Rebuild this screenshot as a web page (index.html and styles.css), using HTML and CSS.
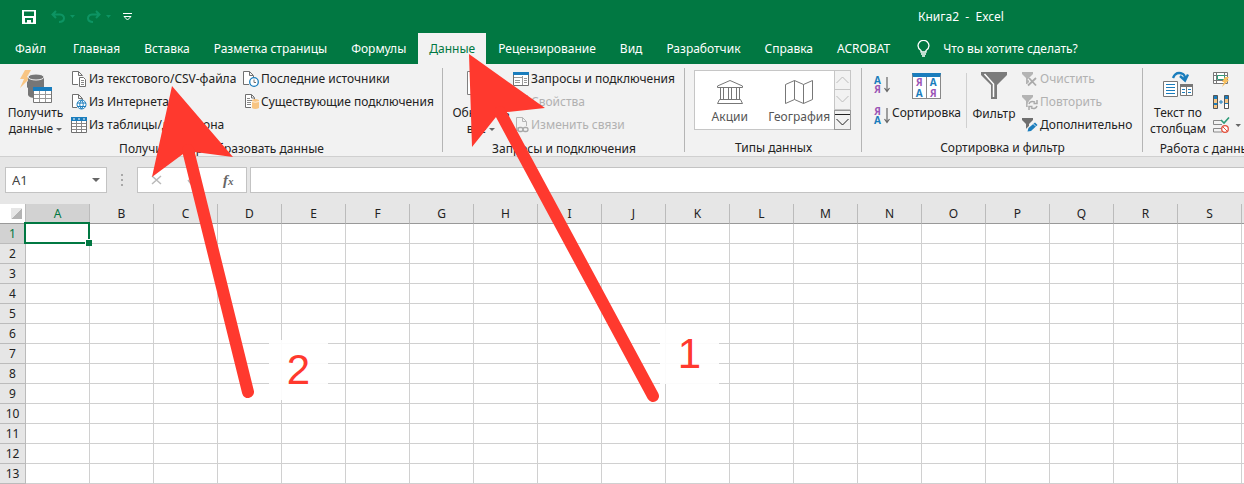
FILE: index.html
```html
<!DOCTYPE html>
<html lang="ru">
<head>
<meta charset="utf-8">
<title>Книга2 - Excel</title>
<link rel="stylesheet" href="styles.css">
</head>
<body>
<div class="app">
  <header class="titlebar">
    <div class="quick">
      <button class="qbtn save" aria-label="Сохранить"><svg width="14" height="14" viewBox="0 0 14 14"><path fill="#fff" fill-rule="evenodd" d="M0 0H14V14H0ZM2 1.500V6H12V1.500ZM3 8V12.500H5V10H9V12.500H11V8Z"/><path fill="#fff" d="M6 11h2v2H6z"/></svg></button>
      <button class="qbtn" aria-label="Отменить"><svg width="25" height="14" viewBox="0 0 25 14"><path d="M5 1L1.500 4.500L5 8M2 4.500H9Q13 5 13 8.500Q12.500 12 8 12" fill="none" stroke="#0d9463" stroke-width="2"/><path d="M19 5h5l-2.500 3z" fill="#0d9463"/></svg></button>
      <button class="qbtn" aria-label="Вернуть"><svg width="25" height="14" viewBox="0 0 25 14"><path d="M9 1L12.500 4.500L9 8M12 4.500H5Q1 5 1 8.500Q1.500 12 6 12" fill="none" stroke="#0d9463" stroke-width="2"/><path d="M19 5h5l-2.500 3z" fill="#0d9463"/></svg></button>
      <button class="qbtn" aria-label="Настройка панели"><svg width="9" height="8" viewBox="0 0 9 8"><path d="M0 .5H9M1 3.500L4.500 7L8 3.500Z" fill="none" stroke="#fff"/></svg></button>
    </div>
    <div class="doc-title">Книга2&nbsp; -&nbsp; Excel</div>
  </header>
  <nav class="tabs">
    <button class="tab file">Файл</button>
    <button class="tab">Главная</button>
    <button class="tab">Вставка</button>
    <button class="tab">Разметка страницы</button>
    <button class="tab">Формулы</button>
    <button class="tab active">Данные</button>
    <button class="tab">Рецензирование</button>
    <button class="tab">Вид</button>
    <button class="tab">Разработчик</button>
    <button class="tab">Справка</button>
    <button class="tab">ACROBAT</button>
    <button class="tab tell"><svg width="13" height="17" viewBox="0 0 13 17"><path d="M4 12V10.500Q1 8.500 1 5.800A5.300 5.200 0 0 1 12 5.800Q12 8.500 9 10.500V12ZM4 14H9M5 16H8" fill="none" stroke="#fff" stroke-width="1.300"/></svg>Что вы хотите сделать?</button>
  </nav>

  <main class="ribbon">
    <section class="group g-get">
      <div class="body">
        <button class="big"><svg width="34" height="33" viewBox="0 0 34 33"><path d="M6 0H12L8 7H12L1 18L5 9H1Z" fill="#f8c583"/><path d="M9 7V25Q10 28 16 28V17H25V7Z" fill="#767676"/><path d="M8 12L12 8V15L8 18Z" fill="#767676"/><ellipse cx="17" cy="7" rx="8" ry="3" fill="#767676" stroke="#f2f2f2"/><path d="M14.500 18.500H32.500V32.500H14.500Z" fill="#fff" stroke="#767676"/><path d="M14 17H33V21H14Z" fill="#1a7dbd"/><path d="M20.500 21V32M26.500 21V32M15 24.500H32M15 28.500H32" stroke="#999"/></svg><span>Получить<br>данные <i class="caret"></i></span></button>
        <div class="stack">
          <button class="cmd"><svg width="16" height="16" viewBox="0 0 16 16"><path d="M7 13.500H1.500V.5H7.500L11.500 4.500V5M7.500 .5V4.500H11" fill="#fff" stroke="#707070"/><path d="M8.500 6.500H12.500L14.500 8.500V15.500H8.500Z" fill="#fff" stroke="#707070"/><path d="M10 9.500h3M10 11.500h3M10 13.500h3" stroke="#888"/></svg>Из текстового/CSV-файла</button>
          <button class="cmd"><svg width="16" height="16" viewBox="0 0 16 16"><path d="M6 13.500H1.500V.5H7.500L11.500 4.500V6M7.500 .5V4.500H11" fill="#fff" stroke="#707070"/><circle cx="10.500" cy="10.500" r="4.500" fill="#fff" stroke="#1a7dbd"/><path d="M6 9h9M6 12.500h9M10.500 6Q7 10.500 10.500 15M10.500 6Q14 10.500 10.500 15" fill="none" stroke="#1a7dbd"/></svg>Из Интернета</button>
          <button class="cmd"><svg width="16" height="16" viewBox="0 0 16 16"><path d="M.5 1V15.500H15.500V1" fill="#fff" stroke="#707070"/><path d="M5.500 4V15M10.500 4V15M1 6.500H15M1 9.500H15M1 12.500H15" stroke="#888"/><path d="M0 0H16V4H0Z" fill="#1a7dbd"/><path d="M2 2h2M7 2h2M12 2h2" stroke="#fff"/></svg>Из таблицы/диапазона</button>
        </div>
        <div class="stack">
          <button class="cmd"><svg width="16" height="16" viewBox="0 0 16 16"><path d="M6 13.500H.5V.5H6.500L10.500 4.500V6M6.500 .5V4.500H10" fill="#fff" stroke="#707070"/><circle cx="11" cy="11" r="4.300" fill="#fff" stroke="#1a7dbd" stroke-width="1.300"/><path d="M11 8.500V11.500H13" fill="none" stroke="#707070"/></svg>Последние источники</button>
          <button class="cmd"><svg width="16" height="16" viewBox="0 0 16 16"><path d="M8 13.500H2.500V.5H8.500L11.500 3.500V6M8.500 .5V4H11" fill="#fff" stroke="#707070"/><path d="M4 4.500h3M4 6.500h5M4 8.500h4M4 10.500h4" stroke="#888"/><path d="M9 6Q12 4 16 6V14Q12 16 9 14Z" fill="#f8c583"/><path d="M9 7.500Q12 9 16 7.500" fill="none" stroke="#fff" stroke-width=".7"/></svg>Существующие подключения</button>
        </div>
      </div>
      <h2 class="caption">Получить и преобразовать данные</h2>
    </section>

    <section class="group g-query">
      <div class="body">
        <button class="big"><svg width="28" height="33" viewBox="0 0 28 33"><path d="M.5 1.500H15L21.500 8V24.500H.5ZM15 1.500V8H21.500" fill="#fff" stroke="#808080"/></svg><span>Обновить<br>все <i class="caret"></i></span></button>
        <div class="stack">
          <button class="cmd"><svg width="16" height="14" viewBox="0 0 16 14"><path d="M.5 1V13.500H15.500V1" fill="#fff" stroke="#707070"/><path d="M0 0H16V3H0Z" fill="#1a7dbd"/><path d="M9.500 4V13M1 5.500H9M11 6.500h3M11 8.500h3M11 10.500h3M2 8.500h5M2 10.500h5" stroke="#999"/></svg>Запросы и подключения</button>
          <button class="cmd" disabled><svg width="16" height="16" viewBox="0 0 16 16"><path d="M3.500 1.500H14.500V13.500H3.500Z" fill="#fff" stroke="#b5b5b5"/></svg>Свойства</button>
          <button class="cmd" disabled><svg width="16" height="16" viewBox="0 0 16 16"><path d="M5 10V13.500H3.500V.5H9.500L13.500 4.500V9M9.500 .5V4.500H13" fill="none" stroke="#b5b5b5"/><rect x="5" y="10.500" width="5" height="4" rx="2" fill="none" stroke="#a8a8a8" stroke-width="1.300"/><rect x="10" y="10.500" width="5" height="4" rx="2" fill="none" stroke="#a8a8a8" stroke-width="1.300"/></svg>Изменить связи</button>
        </div>
      </div>
      <h2 class="caption">Запросы и подключения</h2>
    </section>

    <section class="group g-types">
      <div class="body">
        <div class="gallery">
          <button class="type"><svg width="28" height="26" viewBox="0 0 28 26"><path d="M1.500 8.500V7L14 1.500L26.500 7V8.500ZM3.500 20.500H24.500L26.500 24.500H1.500ZM4.500 9V20M7.500 9V20M12.500 9V20M15.500 9V20M20.500 9V20M23.500 9V20" fill="none" stroke="#777"/></svg>Акции</button>
          <button class="type"><svg width="30" height="26" viewBox="0 0 30 26"><path d="M1.500 5.500L10.500 1.500L19.500 5.500L28.500 1.500V20.500L19.500 24.500L10.500 20.500L1.500 24.500ZM10.500 1.500V20.500M19.500 5.500V24.500" fill="none" stroke="#777"/></svg>География</button>
          <div class="scroll">
            <button aria-label="Вверх" disabled><svg width="13" height="8" viewBox="0 0 13 8"><path d="M.5 7L6.500 1L12.500 7" fill="none" stroke="#bbb"/></svg></button>
            <button aria-label="Вниз" disabled><svg width="13" height="8" viewBox="0 0 13 8"><path d="M.5 1L6.500 7L12.500 1" fill="none" stroke="#bbb"/></svg></button>
            <button class="more" aria-label="Ещё"><svg width="15" height="14" viewBox="0 0 15 14"><path d="M0 1.500H15M1.500 6L7.500 12L13.500 6" fill="none" stroke="#222"/></svg></button>
          </div>
        </div>
      </div>
      <h2 class="caption">Типы данных</h2>
    </section>

    <section class="group g-sort">
      <div class="body">
        <div class="az">
          <button class="azbtn" aria-label="Сортировка от А до Я"><span class="letters"><b class="blue">А</b><b class="violet">Я</b></span><svg width="6" height="16" viewBox="0 0 6 16"><path d="M3 0V14M.5 11L3 14.500L5.500 11" fill="none" stroke="#666" stroke-width="1.200"/></svg></button>
          <button class="azbtn" aria-label="Сортировка от Я до А"><span class="letters"><b class="violet">Я</b><b class="blue">А</b></span><svg width="6" height="16" viewBox="0 0 6 16"><path d="M3 0V14M.5 11L3 14.500L5.500 11" fill="none" stroke="#666" stroke-width="1.200"/></svg></button>
        </div>
        <button class="big sort"><span class="sorticon"><b class="violet">Я</b><b class="blue">А</b><b class="blue">А</b><b class="violet">Я</b></span><span>Сортировка</span></button>
        <button class="big filter"><svg width="28" height="33" viewBox="0 0 28 33"><path d="M1 2H27V5L17 15V29H11V15L1 5Z" fill="#7b7b7b"/><path d="M4.500 4L13.500 14V27" fill="none" stroke="#fff" stroke-width="1.500"/></svg><span>Фильтр</span></button>
        <div class="stack">
          <button class="cmd" disabled><svg width="16" height="16" viewBox="0 0 16 16"><path d="M0 1H11V3L7 7V13H4V7L0 3Z" fill="#b4b4b4"/><path d="M7 7L14 15M14 7L6 15" stroke="#f2f2f2" stroke-width="4"/><path d="M7 7L14 14.500M14 7L6 14.500" stroke="#aaa" stroke-width="1.800"/></svg>Очистить</button>
          <button class="cmd" disabled><svg width="16" height="16" viewBox="0 0 16 16"><path d="M0 1H11V3L7 7V13H4V7L0 3Z" fill="#b4b4b4"/><circle cx="11" cy="11" r="5.500" fill="#f2f2f2"/><path d="M7 10Q8 6.500 13 8M15 6V9.500H11.500M15 12Q14 15.500 9 14M7 16V12.500H10.500" fill="none" stroke="#aaa" stroke-width="1.500"/></svg>Повторить</button>
          <button class="cmd"><svg width="16" height="16" viewBox="0 0 16 16"><path d="M0 1H11V3L7 7V13H4V7L0 3Z" fill="#6f6f6f"/><path d="M5 15L14 6" stroke="#f2f2f2" stroke-width="6"/><path d="M5.500 14.500L6.500 11L13 5.500L15.500 8L9 14Z" fill="#1a7dbd"/><path d="M11.500 7L14 9.500" stroke="#fff" stroke-width=".8"/></svg>Дополнительно</button>
        </div>
      </div>
      <h2 class="caption">Сортировка и фильтр</h2>
    </section>

    <section class="group g-tools">
      <div class="body">
        <button class="big"><svg width="30" height="33" viewBox="0 0 30 33"><path d="M10 8Q13 1 20 4Q22 5 22 9M17 6L22 10.500L25 4.500" fill="none" stroke="#1a7dbd" stroke-width="2.400"/><path d="M.5 11.500H14.500V26.500H.5Z" fill="#fff" stroke="#777"/><path d="M3 14.500h9M3 17.500h9M3 20.500h9M3 23.500h9" stroke="#1a7dbd"/><path d="M17.500 14.500H29.500V25.500H17.500Z" fill="#fff" stroke="#777"/><path d="M17 14H30V17H17Z" fill="#777"/><path d="M23.500 17V25" stroke="#777"/><path d="M19 19.500h3M19 22.500h3M25 19.500h3M25 22.500h3" stroke="#1a7dbd"/></svg><span>Текст по<br>столбцам</span></button>
        <div class="stack">
          <button class="cmd" aria-label="Мгновенное заполнение"><svg width="16" height="16" viewBox="0 0 16 16"><path d="M.5 1.500H14.500V12.500H.5ZM0 4.500H15M0 9.500H15M3.500 1V13M11.500 1V5" fill="#fff" stroke="#777"/><path d="M4.500 4.500H11.500V8.500H4.500Z" fill="#fff" stroke="#2d9b78"/><path d="M12 6H16L14 9H16L9 16L11 11H9Z" fill="#f8c060"/></svg></button>
          <button class="cmd" aria-label="Удалить дубликаты"><svg width="16" height="16" viewBox="0 0 16 16"><path d="M.5 1.500H4.500V14.500H.5ZM11.500 1.500H15.500V14.500H11.500Z" fill="#1a7dbd" stroke="#555"/><path d="M1 5h3v4H1zM1 11h3v3H1zM12 5h3v4h-3z" fill="#f8c583"/><path d="M12 10h3v4h-3z" fill="#fff"/><path d="M6 8H10M8 6V10" stroke="#1a7dbd"/></svg></button>
          <button class="cmd" aria-label="Проверка данных"><svg width="28" height="16" viewBox="0 0 28 16"><path d="M9 3.500H.5V7.500H9M9 11.500H.5V15H9" fill="none" stroke="#888"/><path d="M8 3L11 6L16 .5" fill="none" stroke="#2d9b78" stroke-width="1.600"/><circle cx="12" cy="12" r="3.300" fill="#fff" stroke="#e2503c" stroke-width="1.300"/><path d="M10 10L14 14" stroke="#e2503c"/><path d="M22.500 7H28L25.200 10Z" fill="#666"/></svg></button>
        </div>
      </div>
      <h2 class="caption">Работа с данными</h2>
    </section>
  </main>

  <div class="formula-row">
    <div class="namebox"><input class="name-input" aria-label="Имя" value="A1"><i class="caret"></i></div>
    <svg class="grip" width="2" height="12" viewBox="0 0 2 12"><path d="M0 0h2v2H0zM0 5h2v2H0zM0 10h2v2H0z" fill="#a8a8a8"/></svg>
    <div class="fx-buttons">
      <button aria-label="Отмена"><svg width="11" height="10" viewBox="0 0 11 10"><path d="M1 1L10 9M10 1L1 9" stroke="#b9b9b9" stroke-width="1.500"/></svg></button>
      <button aria-label="Ввод"><svg width="11" height="10" viewBox="0 0 11 10"><path d="M1 5L4 9L10 1" fill="none" stroke="#b9b9b9" stroke-width="1.500"/></svg></button>
      <button class="fx" aria-label="Вставить функцию">f<small>x</small></button>
    </div>
    <input class="formula" aria-label="Строка формул">
  </div>

  <div class="sheet"><table class="grid" id="grid"></table></div>

  <svg class="arrows" width="1244" height="484" viewBox="0 0 1244 484" aria-hidden="true">
    <g fill="#ff392e"><path d="M172 86L233 157L195 152L183 154L152 177Z"/><path d="M469 54L545 108L507 112L496 117L472 147Z"/></g>
    <path d="M188 150L248 392M500 112L653 396" fill="none" stroke="#ff392e" stroke-width="12" stroke-linecap="round"/>
  </svg>
  <div class="callout two">2</div>
  <div class="callout one">1</div>
</div>
<script src="grid.js"></script>
</body>
</html>
```
FILE: styles.css
```css
* { box-sizing: border-box; }
body { margin: 0; font: 12px/16px "Noto Sans", "Open Sans", sans-serif; color: #222; }
button, input { font: inherit; color: inherit; border: 0; padding: 0; margin: 0; background: none; }
svg { display: block; flex: none; }
.app { position: relative; height: 100vh; overflow: hidden; display: flex; flex-direction: column; background: #e6e6e6; }

.titlebar { flex: none; height: 33px; background: #017842; color: #fff; display: flex; align-items: center; }
.quick { display: flex; align-items: center; gap: 11px; padding-left: 22px; flex: 1 0 0; }
.save { margin-right: 4px; }
.doc-title { flex: none; width: 326px; }

.tabs { flex: none; height: 31px; background: #017842; display: flex; }
.tab { color: #fff; padding: 0 12px; white-space: nowrap; }
.tab.file { padding: 0 15px; }
.tab.active { background: #f2f2f2; color: #017842; padding: 0 11px; }
.tell { display: flex; align-items: center; gap: 13px; padding-left: 15px; }

.ribbon { flex: none; display: flex; height: 93px; background: #f2f2f2; border-bottom: 1px solid #d0d0d0; overflow: hidden; }
.group { position: relative; flex: none; display: flex; flex-direction: column; padding-top: 3px; }
.group::after { content: ""; position: absolute; right: 0; top: 4px; bottom: 4px; width: 1px; background: #b5b5b5; }
.g-get { width: 443px; }
.g-query { width: 242px; }
.g-types { width: 177px; }
.g-sort { width: 281px; }
.g-tools { width: 140px; }
.body { display: flex; height: 70px; }
.caption { margin: 4px 0 0; font: inherit; text-align: center; white-space: nowrap; }
.stack { display: flex; flex-direction: column; }
.cmd { display: flex; align-items: center; gap: 2px; height: 23px; white-space: nowrap; text-align: left; }
.cmd:disabled { color: #b1b1b1; }
.big { display: flex; flex-direction: column; align-items: center; gap: 2px; padding-top: 3px; white-space: nowrap; }
.big > svg { height: 33px; }
.caret { display: inline-block; border: 3px solid transparent; border-top-color: #666; border-bottom: 0; vertical-align: middle; }

.g-get .big { width: 71px; }
.g-get .stack { width: 172px; flex: none; }
.g-query .big { width: 70px; padding-left: 6px; }
.g-tools .big { width: 70px; }

.gallery { display: flex; width: 157px; height: 60px; margin: 3px 0 0 9px; background: #fff; border: 1px solid #c6c6c6; }
.type { display: flex; flex-direction: column; align-items: center; justify-content: center; gap: 4px; width: 70px; color: #555; padding-top: 4px; }
.scroll { display: flex; flex-direction: column; width: 16px; background: #f2f2f2; margin-left: auto; }
.scroll button { flex: 1; display: grid; place-items: center; border-left: 1px solid #c6c6c6; border-bottom: 1px solid #c6c6c6; }
.scroll .more { border: 1px solid #999; margin: 0 -1px -1px 0; }

.az { display: flex; flex-direction: column; gap: 13px; width: 32px; padding: 9px 0 0 12px; }
.azbtn { display: flex; align-items: center; gap: 3px; }
.letters { display: flex; flex-direction: column; font: 10px/9px "Open Sans", sans-serif; width: 7px; }
.blue { color: #1a7dbd; }
.violet { color: #9a55b5; }
.sort { width: 65px; padding-top: 6px; gap: 6px; }
.sorticon { display: grid; grid-template-columns: 1fr 1fr; width: 29px; height: 26px; border: 1px solid #888; border-top: 4px solid #1a7dbd; background: #fff; font: 10px/11px "Open Sans", sans-serif; text-align: center; }
.sorticon b:nth-child(odd) { border-right: 1px solid #888; }
.filter { width: 56px; margin-left: 7px; gap: 3px; background: linear-gradient(#d0d0d0, #d0d0d0) 0 6px / 1px 55px no-repeat; }

.formula-row { flex: none; display: flex; align-items: center; height: 47px; padding: 0 0 1px 5px; }
.namebox { display: flex; align-items: center; width: 102px; height: 26px; background: #fff; border: 1px solid #c3c3c3; padding: 0 6px; }
.name-input { flex: 1; width: 60px; color: #444; font-size: 13px; }
.namebox .caret { border-width: 4px; border-bottom: 0; }
.grip { margin: 0 14px; }
.fx-buttons { display: flex; justify-content: space-around; width: 110px; height: 26px; background: #fff; border: 1px solid #c3c3c3; }
.fx-buttons button { display: grid; place-items: center; }
.fx-buttons .fx { display: block; font: italic bold 15px/22px "Liberation Serif", serif; color: #666; }
.fx small { font-size: 11px; }
.formula { flex: 1; height: 26px; margin-left: 3px; background: #fff; border: 1px solid #c3c3c3; border-right: 0; }

.sheet { flex: 1; overflow: hidden; background: #fff; }
.grid { table-layout: fixed; width: 1306px; border-collapse: separate; border-spacing: 0; color: #222; }
.grid th { font-weight: 400; padding: 0; background: #e6e6e6; height: 20px; text-align: center; border-right: 1px solid #bbb; border-bottom: 1px solid #bbb; line-height: 18px; }
.grid thead th { border-bottom-color: #999; }
.grid .corner { width: 26px; background: linear-gradient(135deg, #e6e6e6 50%, #b4b4b4 50%) content-box #e6e6e6; padding: 4px 3px 4px 11px; }
.grid td { height: 20px; padding: 0; border-right: 1px solid #d0d0d0; border-bottom: 1px solid #d0d0d0; }
.grid .on { background: #d2d2d2; color: #017842; }
.grid .selected { position: relative; }
.selected::before { content: ""; position: absolute; inset: -2px -1px -1px -2px; border: 2px solid #017842; }
.selected::after { content: ""; position: absolute; right: -3px; bottom: -3px; width: 6px; height: 6px; background: #017842; border: solid #fff; border-width: 1px 0 0 1px; }

.arrows { position: absolute; left: 0; top: 0; pointer-events: none; }
.callout { position: absolute; width: 59px; height: 60px; background: rgba(255, 255, 255, .9); color: #ff392e; font: 42px/60px "Liberation Sans", Arial, sans-serif; text-align: center; }
.callout.two { left: 269px; top: 340px; }
.callout.one { left: 660px; top: 324px; }
```
FILE: grid.js
```js
const columns = [..."ABCDEFGHIJKLMNOPQRS", ""];
const lastNumbered = 13;
const head = '<thead><tr><th class="corner"></th>' +
  columns.map((c, i) => `<th${i ? "" : ' class="on"'}>${c}</th>`).join("") + "</tr></thead>";
let rows = "";
for (let r = 1; r <= lastNumbered + 1; r++) {
  rows += `<tr><th${r === 1 ? ' class="on"' : ""}>${r <= lastNumbered ? r : ""}</th>` +
    columns.map((c, i) => `<td${r === 1 && i === 0 ? ' class="selected"' : ""}></td>`).join("") + "</tr>";
}
document.getElementById("grid").innerHTML = head + "<tbody>" + rows + "</tbody>";
```
